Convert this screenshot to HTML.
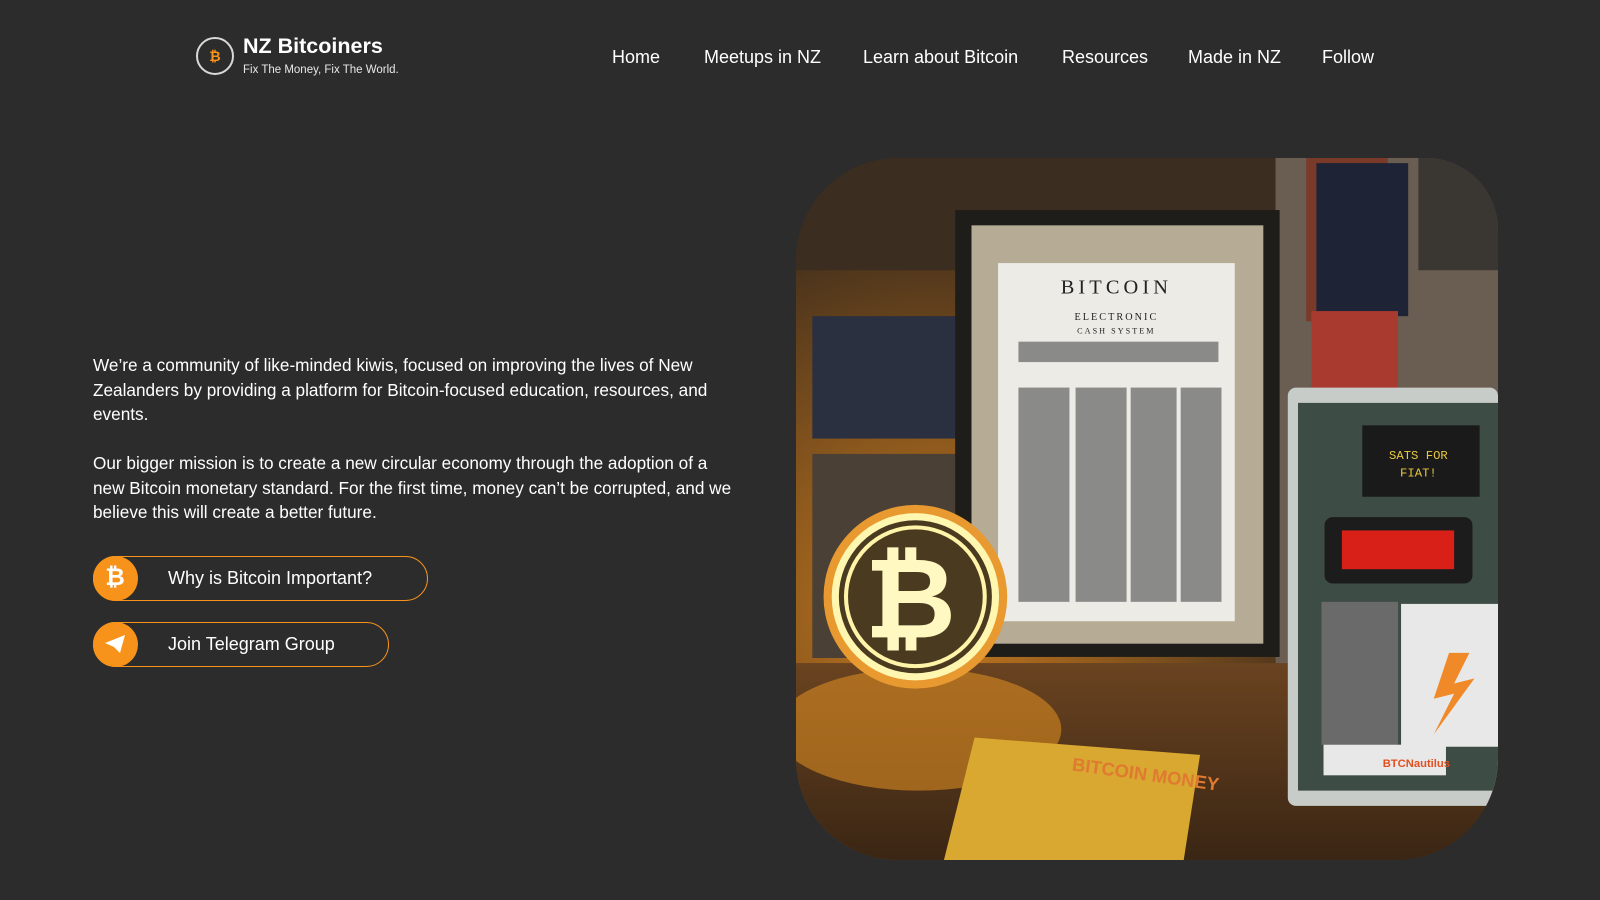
<!DOCTYPE html>
<html><head><meta charset="utf-8">
<style>
*{margin:0;padding:0;box-sizing:border-box}
body{width:1600px;height:900px;background:#2c2c2c;font-family:"Liberation Sans",sans-serif;color:#fff;position:relative;overflow:hidden}
.logo{position:absolute;left:196px;top:37px;width:38px;height:38px;border:2px solid #d8d8d8;border-radius:50%;display:flex;align-items:center;justify-content:center;color:#f7931a;font-weight:bold;font-size:14px}
.brand{position:absolute;left:243px;top:34px;font-size:21.5px;font-weight:bold}
.tag{position:absolute;left:243px;top:64px;font-size:11.5px;color:#e8e8e8}
nav a{position:absolute;top:47px;font-size:18px;color:#fff;text-decoration:none}
p.t{position:absolute;left:93px;width:645px;font-size:17.2px;line-height:24.5px;color:#fff}
.btn{position:absolute;left:93px;height:45px;border:1.5px solid #f7931a;border-radius:23px;font-size:18px;line-height:42px;padding-left:74px}
.ic{position:absolute;left:-1.5px;top:-1.5px;width:45px;height:45px;border-radius:50%;background:#f7931a;display:flex;align-items:center;justify-content:center;color:#fff;font-weight:bold;font-size:24px}
.photo{position:absolute;left:796px;top:158px;width:702px;height:702px;border-radius:102px 72px 102px 102px;overflow:hidden}
</style></head><body>
<div class="logo">₿</div>
<div class="brand">NZ Bitcoiners</div>
<div class="tag">Fix The Money, Fix The World.</div>
<nav>
<a style="left:612px">Home</a>
<a style="left:704px">Meetups in NZ</a>
<a style="left:863px">Learn about Bitcoin</a>
<a style="left:1062px">Resources</a>
<a style="left:1188px">Made in NZ</a>
<a style="left:1322px">Follow</a>
</nav>
<p class="t" style="top:353px">We’re a community of like-minded kiwis, focused on improving the lives of New Zealanders by providing a platform for Bitcoin-focused education, resources, and events.</p>
<p class="t" style="top:451px">Our bigger mission is to create a new circular economy through the adoption of a new Bitcoin monetary standard. For the first time, money can’t be corrupted, and we believe this will create a better future.</p>
<div class="btn" style="top:556px;width:335px"><div class="ic">₿</div>Why is Bitcoin Important?</div>
<div class="btn" style="top:622px;width:296px"><div class="ic"><svg width="22" height="20" viewBox="0 0 22 20"><path d="M1 9 L21 1 L16 19 L10 13 Z" fill="#fff"/></svg></div>Join Telegram Group</div>
<div class="photo">
<svg width="702" height="702" viewBox="0 0 688 688">
<defs>
<radialGradient id="g" cx="0.2" cy="0.65" r="0.6"><stop offset="0" stop-color="#c87a1e"/><stop offset="1" stop-color="#3a2a1c"/></radialGradient>
<linearGradient id="tb" x1="0" y1="0" x2="0" y2="1"><stop offset="0" stop-color="#6a4320"/><stop offset="1" stop-color="#3a2614"/></linearGradient>
</defs>
<rect width="688" height="688" fill="url(#g)"/>
<rect x="0" y="0" width="688" height="110" fill="#3b2d20"/>
<rect x="470" y="0" width="218" height="500" fill="#6a5e52"/>
<rect x="500" y="0" width="80" height="160" fill="#7a3a2a"/>
<rect x="510" y="5" width="90" height="150" fill="#1e2436"/>
<rect x="505" y="150" width="85" height="120" fill="#a83a30"/>
<rect x="610" y="0" width="78" height="110" fill="#3a3632"/>
<rect x="16" y="155" width="145" height="120" fill="#2b3040"/>
<rect x="16" y="290" width="145" height="200" fill="#4a4036"/>
<rect x="156" y="51" width="318" height="438" fill="#1f1d1a"/>
<rect x="172" y="66" width="286" height="410" fill="#b6ab95"/>
<rect x="198" y="103" width="232" height="351" fill="#ecebe6"/>
<text x="314" y="133" text-anchor="middle" font-family="Liberation Serif" font-size="20" fill="#222" letter-spacing="4">BITCOIN</text>
<text x="314" y="159" text-anchor="middle" font-family="Liberation Serif" font-size="10" fill="#222" letter-spacing="2">ELECTRONIC</text>
<text x="314" y="172" text-anchor="middle" font-family="Liberation Serif" font-size="8" fill="#222" letter-spacing="2">CASH SYSTEM</text>
<g fill="#8a8a88"><rect x="218" y="180" width="196" height="20"/><rect x="218" y="225" width="50" height="210"/><rect x="274" y="225" width="50" height="210"/><rect x="328" y="225" width="45" height="210"/><rect x="377" y="225" width="40" height="210"/></g>
<rect x="0" y="495" width="688" height="193" fill="url(#tb)"/>
<ellipse cx="120" cy="560" rx="140" ry="60" fill="#d88a22" opacity="0.6"/>
<circle cx="117" cy="430" r="90" fill="#e89a30"/>
<circle cx="117" cy="430" r="82" fill="#fff6b0"/>
<circle cx="117" cy="430" r="75" fill="#4a3a20"/>
<circle cx="117" cy="430" r="68" fill="none" stroke="#fff4a8" stroke-width="4"/>
<text x="112" y="470" text-anchor="middle" font-family="Liberation Sans" font-size="110" fill="#fff8c0" font-weight="bold">₿</text>
<polygon points="145,688 175,568 396,585 380,688" fill="#d8a830"/>
<text x="270" y="600" font-family="Liberation Sans" font-size="18" font-weight="bold" fill="#e07a30" transform="rotate(8 270 600)">BITCOIN MONEY</text>
<rect x="482" y="225" width="206" height="410" rx="8" fill="#c8ccc8"/>
<rect x="492" y="240" width="196" height="380" fill="#3e4c46"/>
<rect x="555" y="262" width="115" height="70" fill="#1a1a1a"/>
<text x="610" y="295" text-anchor="middle" font-family="Liberation Mono" font-size="12" fill="#e8c840">SATS FOR</text>
<text x="610" y="312" text-anchor="middle" font-family="Liberation Mono" font-size="12" fill="#e8c840">FIAT!</text>
<rect x="518" y="352" width="145" height="65" rx="8" fill="#1c1c1c"/>
<rect x="535" y="365" width="110" height="38" fill="#d82018"/>
<rect x="515" y="435" width="75" height="140" fill="#6a6a6a"/>
<rect x="593" y="437" width="95" height="140" fill="#e8e8e8"/>
<polygon points="640,485 625,530 645,525 625,565 665,510 645,515 660,485" fill="#f08a28"/>
<rect x="517" y="575" width="120" height="30" fill="#e8e8e8"/>
<text x="575" y="597" font-family="Liberation Sans" font-size="11" font-weight="bold" fill="#e05020">BTCNautilus</text>
</svg>
</div>
</body></html>
